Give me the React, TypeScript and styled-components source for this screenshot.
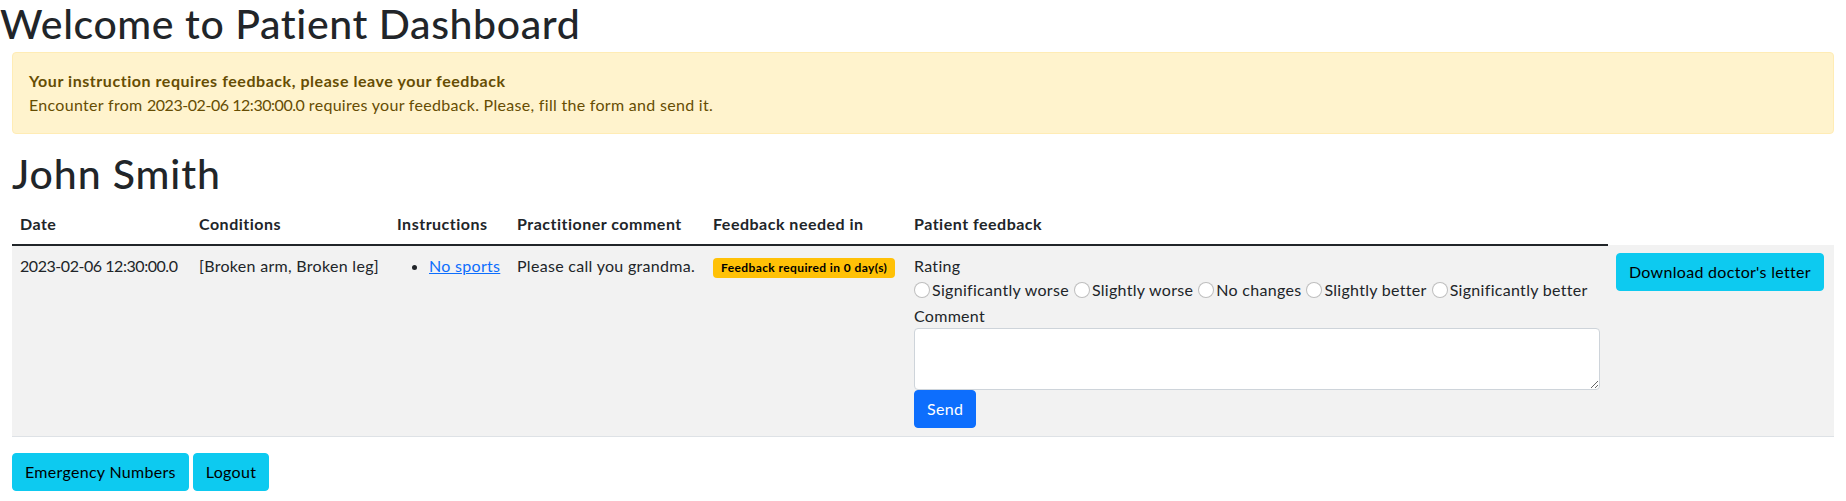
import styled, { createGlobalStyle } from 'styled-components';

const GlobalStyle = createGlobalStyle`
  * { box-sizing: border-box; }
  body {
    margin: 0;
    background: #fff;
    color: #212529;
    font-family: Lato, "Liberation Sans", sans-serif;
    font-size: 16px;
    line-height: 1.5;
    letter-spacing: 0.3px;
  }
`;

const Title = styled.h1`
  font-size: 41px;
  font-weight: 500;
  line-height: 48px;
  letter-spacing: 0.6px;
  margin: 0 0 4px;
`;

const Container = styled.div`
  padding: 0 12px;
`;

const Alert = styled.div`
  background: #fff3cd;
  border: 1px solid #ffecb5;
  color: #664d03;
  padding: 16px;
  border-radius: 4px;
  margin-bottom: 16px;
`;

const AlertHeading = styled.div`
  font-weight: 700;
  letter-spacing: 0.55px;
`;

const Timestamp = styled.span`
  letter-spacing: -0.45px;
`;

const PatientName = styled.h2`
  font-size: 41px;
  font-weight: 500;
  line-height: 48px;
  letter-spacing: 0.9px;
  margin: 0 0 6px;
`;

const Table = styled.table`
  width: 100%;
  border-collapse: collapse;
  table-layout: fixed;
  margin-bottom: 16px;
`;

const Col = styled.col<{ $w: number }>`
  width: ${(p) => p.$w}px;
`;

const Th = styled.th`
  text-align: left;
  font-weight: 700;
  letter-spacing: 0.5px;
  padding: 8px;
  border-bottom: 2px solid #212529;
`;

const StripedRow = styled.tr`
  background: #f2f2f2;
  border-bottom: 1px solid #dee2e6;
`;

const Td = styled.td<{ $nowrap?: boolean }>`
  padding: 8px;
  vertical-align: top;
  white-space: ${(p) => (p.$nowrap ? 'nowrap' : 'normal')};
`;

const List = styled.ul`
  margin: 0 0 16px;
  padding-left: 32px;
`;

const Link = styled.a`
  color: #0d6efd;
  text-decoration: underline;
`;

const Badge = styled.span`
  display: inline-block;
  padding: 4px 8px;
  font-size: 12px;
  font-weight: 700;
  letter-spacing: 0.4px;
  line-height: 1;
  background: #ffc107;
  color: #000;
  border-radius: 4px;
  vertical-align: baseline;
`;

const FieldLabel = styled.label`
  display: block;
`;

const RadioGroup = styled.div`
  display: flex;
  flex-wrap: wrap;
  align-items: center;
  margin-bottom: 2px;
`;

const RadioOption = styled.label`
  display: inline-flex;
  align-items: center;
  gap: 2px;
  margin-right: 5px;
`;

const Radio = styled.input`
  appearance: none;
  width: 16px;
  height: 16px;
  margin: 0;
  border: 1px solid rgba(0, 0, 0, 0.25);
  border-radius: 50%;
  background: #fff;
`;

const TextArea = styled.textarea`
  display: block;
  width: 100%;
  padding: 6px 12px;
  font-family: inherit;
  font-size: 16px;
  line-height: 1.5;
  color: #212529;
  border: 1px solid #ced4da;
  border-radius: 4px;
  background: #fff;
`;

const Button = styled.button<{ $variant?: 'info' | 'primary' }>`
  display: inline-block;
  padding: 6px 12px;
  font-family: inherit;
  font-size: 16px;
  line-height: 1.5;
  letter-spacing: 0.3px;
  border-radius: 4px;
  border: 1px solid ${(p) => (p.$variant === 'primary' ? '#0d6efd' : '#0dcaf0')};
  background: ${(p) => (p.$variant === 'primary' ? '#0d6efd' : '#0dcaf0')};
  color: ${(p) => (p.$variant === 'primary' ? '#fff' : '#000')};
  cursor: pointer;
`;

const Actions = styled.div`
  display: flex;
  gap: 4px;
`;

const ratings = [
  'Significantly worse',
  'Slightly worse',
  'No changes',
  'Slightly better',
  'Significantly better',
];

export default function App() {
  return (
    <>
      <GlobalStyle />
      <Title>Welcome to Patient Dashboard</Title>
      <Container>
        <Alert>
          <AlertHeading>Your instruction requires feedback, please leave your feedback</AlertHeading>
          <div>
            Encounter from <Timestamp>2023-02-06 12:30:00.0</Timestamp> requires your feedback. Please, fill the form and send it.
          </div>
        </Alert>

        <PatientName>John Smith</PatientName>

        <Table>
          <colgroup>
            <Col $w={179} />
            <Col $w={198} />
            <Col $w={120} />
            <Col $w={196} />
            <Col $w={201} />
            <Col $w={702} />
            <Col $w={226} />
          </colgroup>
          <thead>
            <tr>
              <Th>Date</Th>
              <Th>Conditions</Th>
              <Th>Instructions</Th>
              <Th>Practitioner comment</Th>
              <Th>Feedback needed in</Th>
              <Th>Patient feedback</Th>
            </tr>
          </thead>
          <tbody>
            <StripedRow>
              <Td $nowrap>
                <Timestamp>2023-02-06 12:30:00.0</Timestamp>
              </Td>
              <Td>[Broken arm, Broken leg]</Td>
              <Td>
                <List>
                  <li>
                    <Link href="#">No sports</Link>
                  </li>
                </List>
              </Td>
              <Td>Please call you grandma.</Td>
              <Td>
                <Badge>Feedback required in 0 day(s)</Badge>
              </Td>
              <Td>
                <form onSubmit={(e) => e.preventDefault()}>
                  <FieldLabel>Rating</FieldLabel>
                  <RadioGroup>
                    {ratings.map((r) => (
                      <RadioOption key={r}>
                        <Radio type="radio" name="rating" value={r} />
                        {r}
                      </RadioOption>
                    ))}
                  </RadioGroup>
                  <FieldLabel htmlFor="comment">Comment</FieldLabel>
                  <TextArea id="comment" rows={2} />
                  <Button $variant="primary" type="submit">Send</Button>
                </form>
              </Td>
              <Td>
                <Button $variant="info">Download doctor's letter</Button>
              </Td>
            </StripedRow>
          </tbody>
        </Table>

        <Actions>
          <Button $variant="info">Emergency Numbers</Button>
          <Button $variant="info">Logout</Button>
        </Actions>
      </Container>
    </>
  );
}
